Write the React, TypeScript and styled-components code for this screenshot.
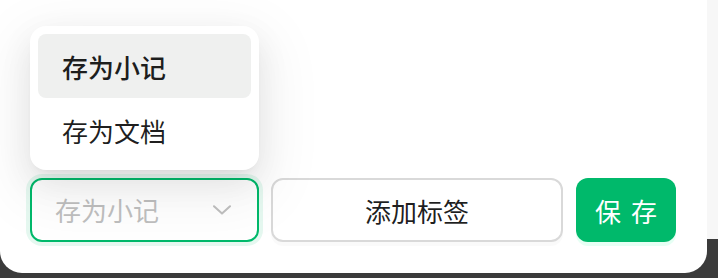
import React from "react"
import styled, { createGlobalStyle } from "styled-components"

const GlobalStyle = createGlobalStyle`
  html, body {
    margin: 0;
    padding: 0;
    background: #3b3b3b;
  }
  body {
    font-family: "Noto Sans CJK SC", "Noto Sans", sans-serif;
  }
`

const Screen = styled.div`
  display: flex;
  align-items: flex-start;
  width: 718px;
  height: 278px;
  overflow: hidden;
`

const Card = styled.div`
  width: 707px;
  height: 273px;
  flex-shrink: 0;
  box-sizing: border-box;
  background: #ffffff;
  border-radius: 0 0 22px 22px;
  padding: 0 31px 31px 30px;
  display: flex;
  flex-direction: column;
  justify-content: flex-end;
`

const SideStrip = styled.div`
  flex: 1;
  height: 239px;
  background: #f7f7f7;
`

const ActionRow = styled.div`
  display: flex;
  align-items: center;
  gap: 12px;
`

const SelectWrap = styled.div`
  position: relative;
  width: 229px;
  flex-shrink: 0;
`

const SelectBox = styled.div`
  height: 64px;
  box-sizing: border-box;
  border: 2px solid #00b96b;
  border-radius: 12px;
  box-shadow: 0 0 0 4px rgba(0, 185, 107, 0.1);
  background: #ffffff;
  padding: 0 26px 0 23px;
  display: flex;
  align-items: center;
  justify-content: space-between;
`

const Placeholder = styled.span`
  font-size: 26px;
  color: #bfbfbf;
  line-height: 1;
`

const Menu = styled.div`
  position: absolute;
  left: 0;
  right: 0;
  bottom: calc(100% + 8px);
  box-sizing: border-box;
  padding: 8px;
  background: #ffffff;
  border-radius: 16px;
  box-shadow: 0 12px 32px 0 rgba(0, 0, 0, 0.08), 0 6px 12px -8px rgba(0, 0, 0, 0.12),
    0 18px 56px 16px rgba(0, 0, 0, 0.05);
  display: flex;
  flex-direction: column;
`

const MenuItem = styled.div<{ $active?: boolean }>`
  height: 64px;
  display: flex;
  align-items: center;
  padding: 0 24px;
  border-radius: 8px;
  font-size: 26px;
  color: rgba(0, 0, 0, 0.88);
  font-weight: ${p => (p.$active ? 500 : 400)};
  background: ${p => (p.$active ? "#eff0ef" : "transparent")};
`

const TagButton = styled.button`
  width: 292px;
  height: 64px;
  box-sizing: border-box;
  border: 2px solid #d9d9d9;
  border-radius: 12px;
  background: #ffffff;
  box-shadow: 0 4px 0 rgba(0, 0, 0, 0.02);
  font-family: inherit;
  font-size: 26px;
  color: rgba(0, 0, 0, 0.88);
  padding: 0;
`

const SaveButton = styled.button`
  width: 100px;
  height: 64px;
  margin-left: 1px;
  border: none;
  border-radius: 12px;
  background: #00b96b;
  box-shadow: 0 4px 0 rgba(5, 255, 145, 0.1);
  font-family: inherit;
  font-size: 26px;
  color: #ffffff;
  letter-spacing: 2px;
  padding: 0 0 0 2px;
`

const Chevron = () => (
  <svg width="18" height="10" viewBox="0 0 18 10" fill="none">
    <path d="M1 1.2 L9 8.6 L17 1.2" stroke="#bfbfbf" strokeWidth="2" strokeLinecap="round" strokeLinejoin="round" />
  </svg>
)

const App: React.FC = () => {
  return (
    <>
      <GlobalStyle />
      <Screen>
        <Card>
          <ActionRow>
            <SelectWrap>
              <Menu>
                <MenuItem $active>存为小记</MenuItem>
                <MenuItem>存为文档</MenuItem>
              </Menu>
              <SelectBox>
                <Placeholder>存为小记</Placeholder>
                <Chevron />
              </SelectBox>
            </SelectWrap>
            <TagButton>添加标签</TagButton>
            <SaveButton>保 存</SaveButton>
          </ActionRow>
        </Card>
        <SideStrip />
      </Screen>
    </>
  )
}

export default App
